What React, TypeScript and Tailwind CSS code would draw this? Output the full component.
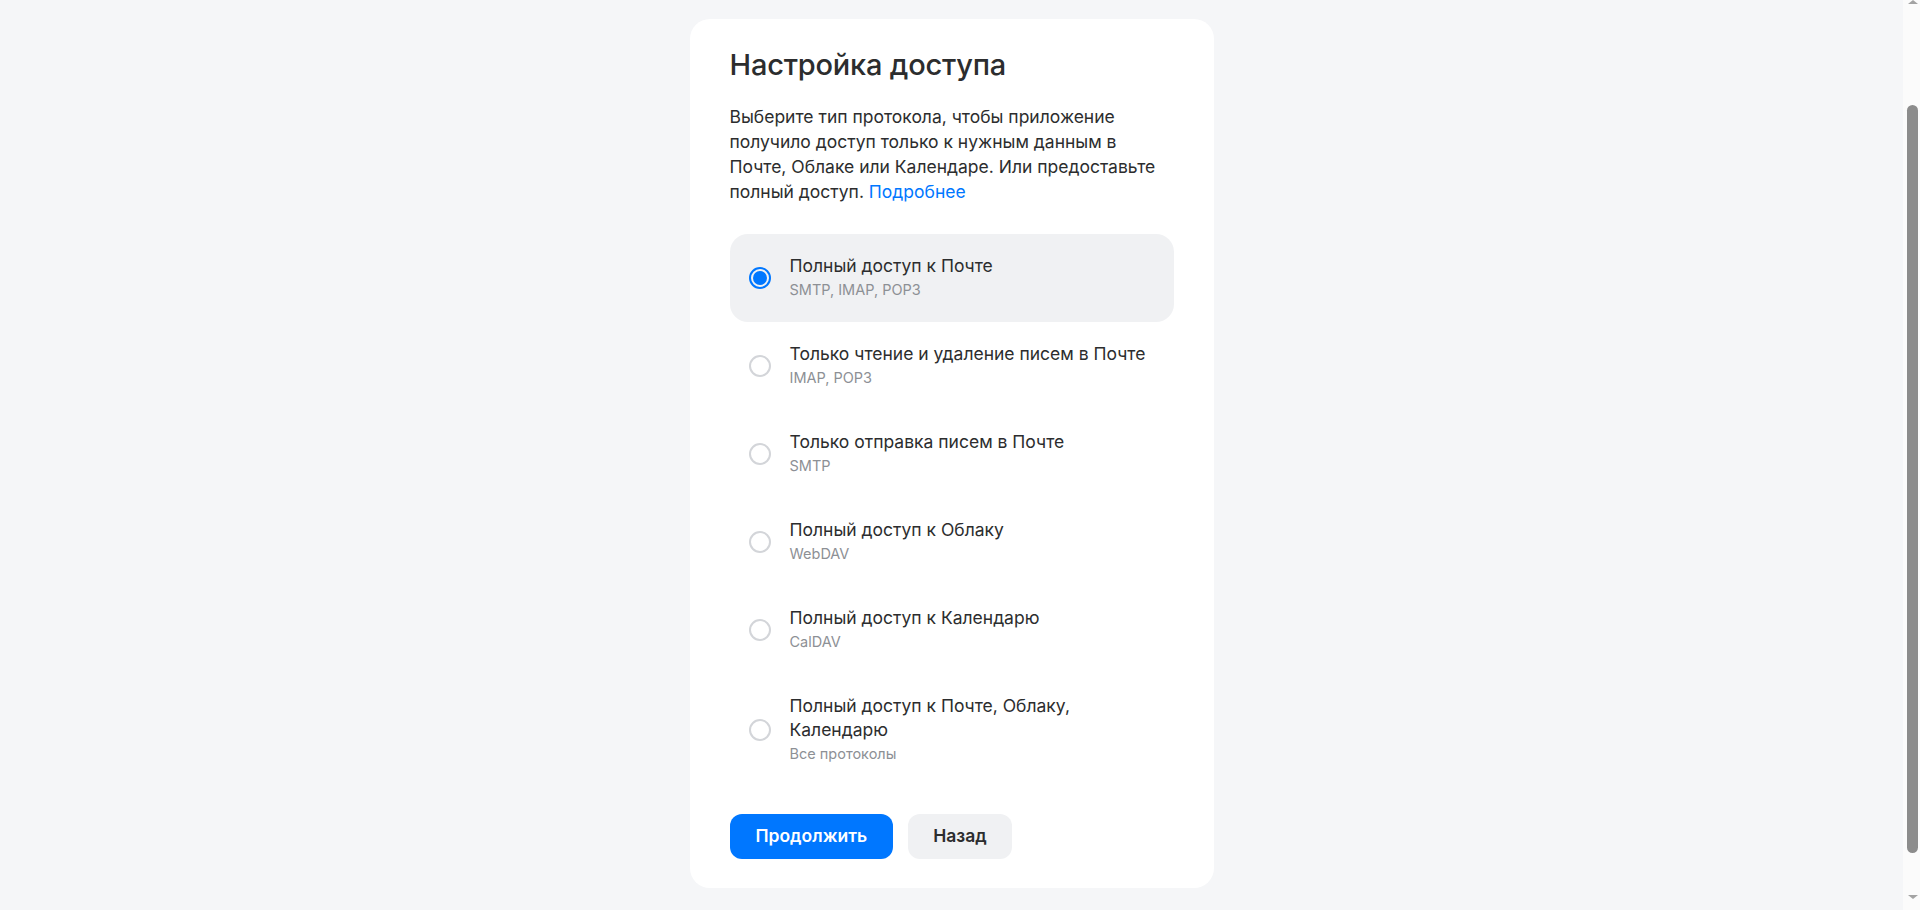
import React, { useState } from "react";

const options = [
  { title: "Полный доступ к Почте", sub: "SMTP, IMAP, POP3" },
  { title: "Только чтение и удаление писем в Почте", sub: "IMAP, POP3" },
  { title: "Только отправка писем в Почте", sub: "SMTP" },
  { title: "Полный доступ к Облаку", sub: "WebDAV" },
  { title: "Полный доступ к Календарю", sub: "CalDAV" },
  { title: "Полный доступ к Почте, Облаку, Календарю", sub: "Все протоколы" },
];

const Radio = ({ checked }: { checked: boolean }) => {
  if (checked) {
    return (
      <span className="flex h-[22px] w-[22px] shrink-0 items-center justify-center rounded-full border-2 border-[#0077ff]">
        <span className="h-[14px] w-[14px] rounded-full bg-[#0077ff]"></span>
      </span>
    );
  }
  return (
    <span className="h-[22px] w-[22px] shrink-0 rounded-full border-2 border-[#d3d5d9]"></span>
  );
};

// window scrollbar as it shows in the reference
const Scrollbar = () => (
  <div className="flex h-screen w-[17px] shrink-0 flex-col items-center bg-[#fbfbfb] pl-[2px]">
    <span className="h-0 w-0 border-x-[5px] border-b-[4px] border-x-transparent border-b-[#a3a3a3]"></span>
    <div className="mt-[101px] h-[748px] w-[11px] rounded-full bg-[#8c8c8c]"></div>
    <div className="flex-1"></div>
    <span className="mb-[11px] h-0 w-0 border-x-[5px] border-t-[4px] border-x-transparent border-t-[#a3a3a3]"></span>
  </div>
);

const App = () => {
  const [selected, setSelected] = useState(0);

  return (
    <div className="flex h-screen overflow-hidden bg-[#f5f6f8] font-['Inter','Noto_Sans',sans-serif] text-[#2c2d2e]">
      <main className="flex flex-1 justify-center pt-[19px]">
        <div className="h-fit w-[524px] rounded-[20px] bg-white px-[40px] pt-[28px] pb-[29px]">
          <h1 className="text-[29px] font-medium leading-[36px] tracking-[-0.2px]">
            Настройка доступа
          </h1>
          <p className="mt-[21px] text-[17.5px] leading-[25px]">
            Выберите тип протокола, чтобы приложение получило доступ только к
            нужным данным в Почте, Облаке или Календаре. Или предоставьте
            полный доступ.{" "}
            <a href="#" className="text-[#0077ff]">
              Подробнее
            </a>
          </p>

          <div className="mt-[30px] flex flex-col">
            {options.map((opt, i) => (
              <label
                key={i}
                onClick={() => setSelected(i)}
                className={`flex cursor-pointer items-center gap-[19px] rounded-[18px] py-[20px] pl-[19px] pr-4 ${
                  selected === i ? "bg-[#f0f1f3]" : ""
                }`}
              >
                <Radio checked={selected === i} />
                <div className="flex flex-col">
                  <span className="text-[17.5px] leading-[24px]">{opt.title}</span>
                  <span className="text-[14.5px] leading-[24px] text-[#8d9095]">
                    {opt.sub}
                  </span>
                </div>
              </label>
            ))}
          </div>

          <div className="mt-[28px] flex items-center gap-[15px]">
            <button className="h-[45px] rounded-[12px] bg-[#0077ff] px-[26px] text-[17.5px] font-semibold text-white">
              Продолжить
            </button>
            <button className="h-[45px] rounded-[12px] bg-[#f0f1f3] px-[25px] text-[17.5px] font-semibold text-[#2c2d2e]">
              Назад
            </button>
          </div>
        </div>
      </main>
      <Scrollbar />
    </div>
  );
};

export default App;
